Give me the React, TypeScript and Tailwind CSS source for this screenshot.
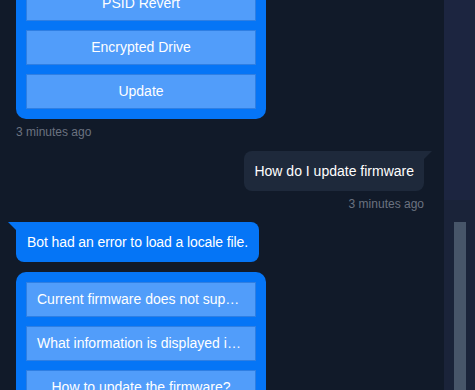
import React from 'react';

const font = { fontFamily: '"Liberation Sans", Arial, sans-serif' };

const OptionCard = ({ options }: { options: string[] }) => (
  <div className="w-[250px] rounded-[10px] bg-[#0575f6] p-[10px] flex flex-col gap-[9px]">
    {options.map((o) => (
      <button
        key={o}
        className="h-[35px] w-full border border-[#2f7fe3] bg-[#519dfa] px-[10px] text-[14px] text-white truncate"
      >
        {o}
      </button>
    ))}
  </div>
);

const Timestamp = () => (
  <div className="text-[12px] leading-4 text-[#6b7280]">3 minutes ago</div>
);

export default function App() {
  return (
    <div className="h-[390px] w-[475px] overflow-hidden flex bg-[#111a29]" style={font}>
      {/* Chat column */}
      <div className="flex-1 flex flex-col pl-4 pr-5 -mt-[68px]">
        <OptionCard options={['Secure Erase', 'PSID Revert', 'Encrypted Drive', 'Update']} />
        <div className="mt-[5px]">
          <Timestamp />
        </div>

        {/* User message */}
        <div className="self-end mt-[11px] relative">
          <div className="rounded-lg rounded-tr-none bg-[#1e293b] px-[10px] py-[10px] text-[14px] leading-5 text-white">
            How do I update firmware
          </div>
          <div className="absolute top-0 -right-[8px] w-0 h-0 border-t-[8px] border-t-[#1e293b] border-r-[8px] border-r-transparent" />
        </div>
        <div className="self-end mt-[5px]">
          <Timestamp />
        </div>

        {/* Bot message */}
        <div className="self-start mt-[10px] relative">
          <div className="rounded-lg rounded-tl-none bg-[#0575f6] px-[11px] py-[10px] text-[14px] leading-5 tracking-[-0.1px] text-white">
            Bot had an error to load a locale file.
          </div>
          <div className="absolute top-0 -left-[8px] w-0 h-0 border-t-[8px] border-t-[#0575f6] border-l-[8px] border-l-transparent" />
        </div>
        <div className="mt-[10px]">
          <OptionCard
            options={[
              'Current firmware does not support this feature',
              'What information is displayed in the app',
              'How to update the firmware?',
            ]}
          />
        </div>
      </div>

      {/* Scrollbar area */}
      <div className="w-[31px] flex flex-col">
        <div className="h-[200px] bg-[#1c2540]" />
        <div className="flex-1 bg-[#1a2339] pl-[10px] pt-[22px]">
          <div className="h-full w-[12px] bg-[#475569]" />
        </div>
      </div>
    </div>
  );
}
